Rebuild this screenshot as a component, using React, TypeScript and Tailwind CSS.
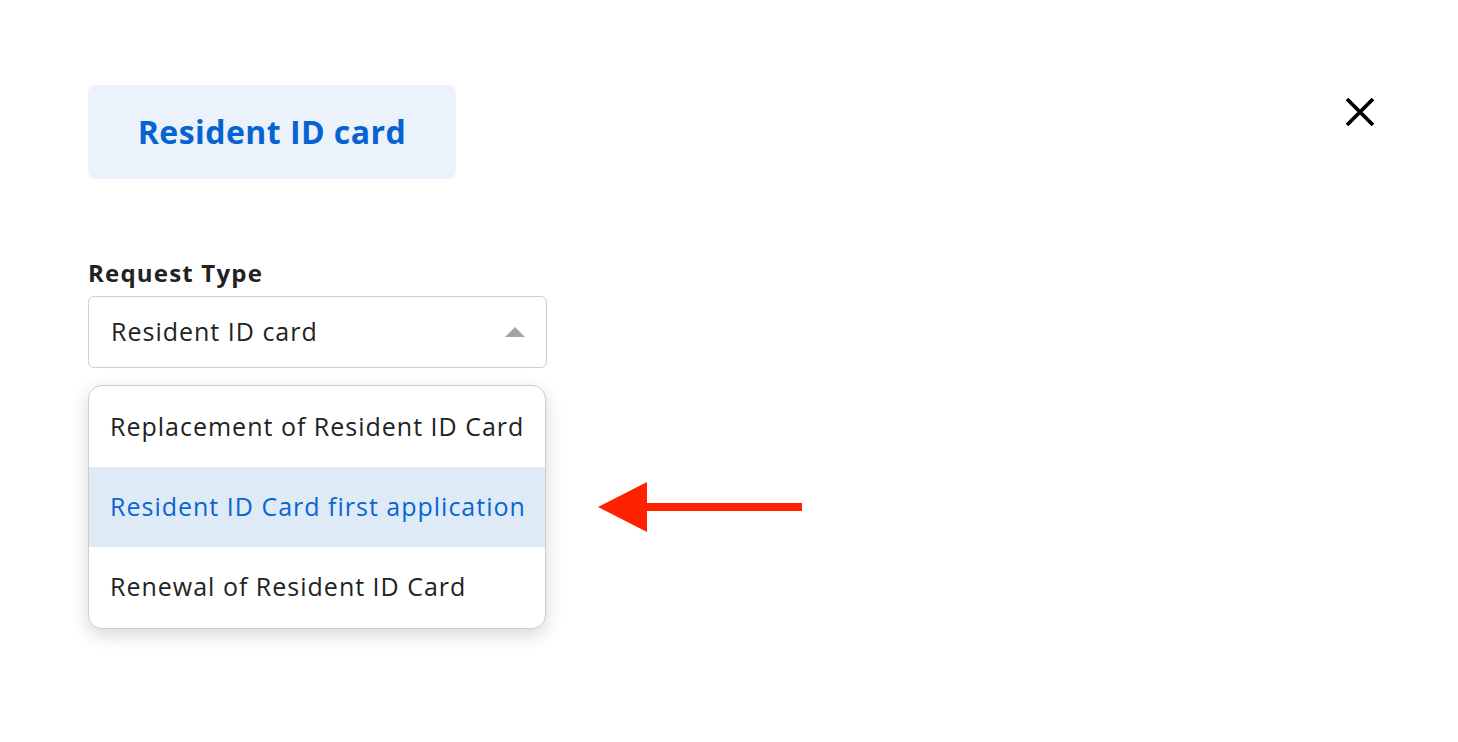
const options = [
  "Replacement of Resident ID Card",
  "Resident ID Card first application",
  "Renewal of Resident ID Card",
];

export default function App() {
  const selected = 1;

  return (
    <div className="min-h-screen w-full bg-white font-['Open_Sans','Liberation_Sans',sans-serif] text-[#222]">
      <div className="flex justify-between pl-[88px] pr-[82px] pt-[85px]">
        <div className="flex h-[94px] w-[368px] items-center justify-center rounded-lg bg-[#ebf2fc]">
          <h1 className="text-[32px] font-bold tracking-[0.45px] text-[#0564d1]">Resident ID card</h1>
        </div>
        <button className="mt-[11px] h-[32px] w-[32px] text-black">
          <svg width="32" height="32" viewBox="0 0 32 32">
            <path d="M3 3 L29 29 M29 3 L3 29" stroke="currentColor" strokeWidth="3.8" />
          </svg>
        </button>
      </div>

      <div className="mt-[81px] pl-[88px]">
        <label className="block text-[24px] font-bold leading-[26px] tracking-[1.2px]">Request Type</label>
        <div className="mt-[10px] flex h-[72px] w-[459px] items-center justify-between rounded-md border border-[#cfcfcf] pl-[22px] pr-[21px]">
          <span className="text-[25px] tracking-[1px]">Resident ID card</span>
          <svg width="20" height="10" viewBox="0 0 20 10">
            <path d="M0 10 L10 0 L20 10 Z" fill="#a3a3a3" />
          </svg>
        </div>

        <div className="mt-[17px] flex items-center gap-[52px]">
          <ul className="w-[458px] overflow-hidden rounded-[14px] border border-[#cdcdcd] bg-white py-px shadow-[0_6px_18px_rgba(0,0,0,0.16)]">
            {options.map((o, i) => (
              <li
                key={o}
                className={
                  i === selected
                    ? "flex h-[80px] items-center bg-[#deebf7] pl-[21px] text-[25px] tracking-[1px] text-[#0a64d2]"
                    : "flex h-[80px] items-center pl-[21px] text-[25px] tracking-[1px]"
                }
              >
                {o}
              </li>
            ))}
          </ul>
          <svg width="205" height="50" viewBox="0 0 205 50">
            <path d="M0 25 L49 0 L49 21 L204 21 L204 29 L49 29 L49 50 Z" fill="#ff2200" />
          </svg>
        </div>
      </div>
    </div>
  );
}
